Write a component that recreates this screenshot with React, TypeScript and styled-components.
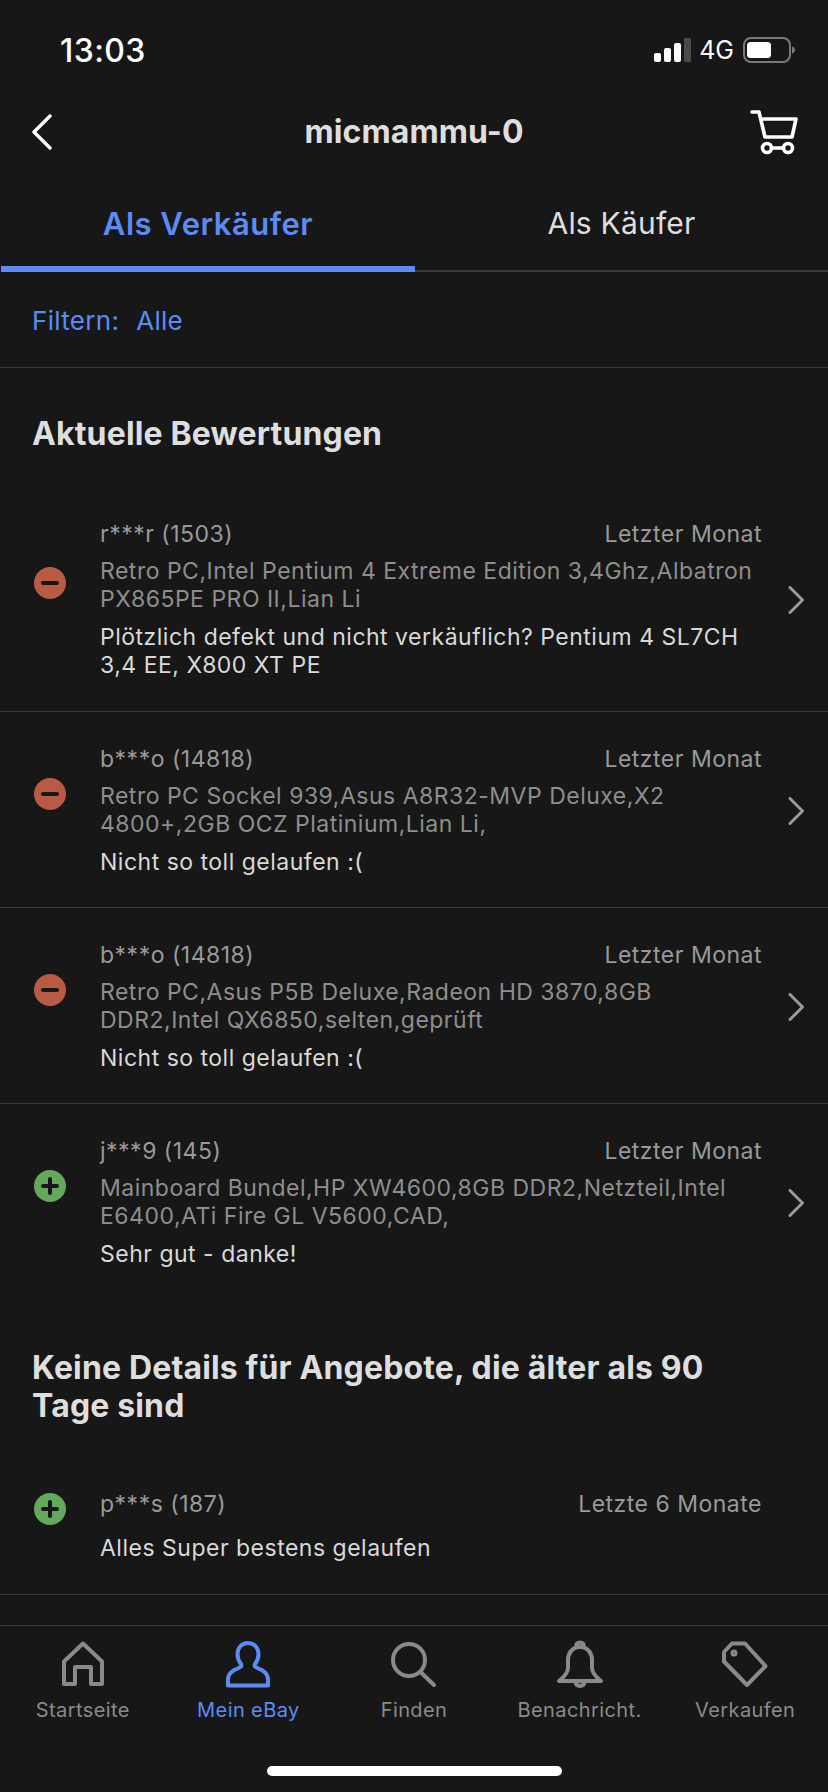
import React from 'react';
import styled, { createGlobalStyle } from 'styled-components';

const GlobalStyle = createGlobalStyle`
	html, body {
		margin: 0;
		padding: 0;
		background: #171717;
	}
	* {
		box-sizing: border-box;
	}
`;

const Screen = styled.div`
	width: 828px;
	height: 1792px;
	display: flex;
	flex-direction: column;
	overflow: hidden;
	background: #171717;
	font-family: Inter, 'Liberation Sans', sans-serif;
`;

const StatusBar = styled.div`
	height: 100px;
	flex: none;
	display: flex;
	align-items: center;
	justify-content: space-between;
	padding: 0 33px 0 60px;
`;

const Time = styled.span`
	font-size: 32px;
	font-weight: 500;
	letter-spacing: 0.4px;
	color: #fff;
`;

const StatusIcons = styled.div`
	display: flex;
	align-items: center;
`;

const Carrier = styled.span`
	font-size: 25px;
	color: #fff;
	margin: 0 9px 0 8px;
`;

const Nav = styled.div`
	height: 64px;
	flex: none;
	display: grid;
	grid-template-columns: 48px 1fr 48px;
	align-items: center;
	justify-items: center;
	padding: 0 30px;
`;

const BackSlot = styled.div`
	justify-self: start;
	display: flex;
`;

const Title = styled.span`
	font-size: 32px;
	font-weight: 700;
	letter-spacing: 0.1px;
	line-height: 36px;
	color: #dedede;
`;

const Tabs = styled.div`
	height: 108px;
	flex: none;
	display: grid;
	grid-template-columns: 415px 1fr;
`;

const Tab = styled.div<{ $active?: boolean }>`
	display: flex;
	align-items: center;
	justify-content: center;
	padding-top: 16px;
	padding-bottom: ${(p) => (p.$active ? 0 : 4)}px;
	margin-left: ${(p) => (p.$active ? 1 : 0)}px;
	font-size: ${(p) => (p.$active ? 31 : 30)}px;
	font-weight: ${(p) => (p.$active ? 600 : 400)};
	letter-spacing: ${(p) => (p.$active ? 0.5 : 0.2)}px;
	color: ${(p) => (p.$active ? '#5b8cf5' : '#dedede')};
	border-bottom: ${(p) => (p.$active ? '6px solid #5b8cf5' : '2px solid #3a3a3a')};
`;

const FilterBar = styled.div`
	height: 96px;
	flex: none;
	display: flex;
	align-items: center;
	gap: 17px;
	padding: 2px 32px 0;
	font-size: 26px;
	letter-spacing: 0.3px;
	color: #5b8cf5;
	border-bottom: 1px solid #3a3a3a;
`;

const Content = styled.div`
	flex: 1;
	min-height: 0;
	overflow: hidden;
`;

const SectionTitle = styled.h2<{ $top: number; $bottom: number }>`
	margin: 0;
	padding: ${(p) => p.$top}px 100px ${(p) => p.$bottom}px 32px;
	font-size: 32px;
	line-height: 38px;
	font-weight: 700;
	letter-spacing: 0.15px;
	color: #dedede;
`;

const Row = styled.div<{ $divider?: boolean }>`
	display: flex;
	align-items: center;
	padding: 33px 24px 31px 34px;
	border-bottom: ${(p) => (p.$divider ? '1px solid #3a3a3a' : 'none')};

	h2 + & {
		padding-bottom: 32px;
	}
`;

const Badge = styled.svg`
	flex: none;
	width: 32px;
	height: 32px;
	margin: 0 34px 34px 0;
`;

const RowBody = styled.div`
	flex: 1;
	min-width: 0;
	font-size: 23px;
	line-height: 28px;
	letter-spacing: 0.5px;
`;

const RowHead = styled.div`
	display: flex;
	justify-content: space-between;
	color: #9a9a9a;
`;

const Product = styled.div`
	margin-top: 9px;
	color: #8e8e8e;
`;

const Comment = styled.div<{ $gap: number }>`
	margin-top: ${(p) => p.$gap}px;
	color: #d9d9d9;
`;

const Chevron = styled.svg<{ $hidden?: boolean }>`
	flex: none;
	width: 16px;
	height: 28px;
	margin-left: 26px;
	visibility: ${(p) => (p.$hidden ? 'hidden' : 'visible')};
`;

const BottomBar = styled.div`
	height: 167px;
	flex: none;
	display: flex;
	flex-direction: column;
	align-items: center;
	border-top: 1px solid #3a3a3a;
`;

const BottomTabs = styled.div`
	width: 100%;
	padding-top: 14px;
	display: grid;
	grid-template-columns: repeat(5, 1fr);
`;

const BottomTab = styled.div<{ $active?: boolean }>`
	display: flex;
	flex-direction: column;
	align-items: center;
	gap: 9px;
	color: ${(p) => (p.$active ? '#5b8cf5' : '#8a8a8a')};
	font-size: 20px;
	letter-spacing: 0.4px;
	line-height: 26px;
	white-space: nowrap;
`;

const TabIcon = styled.svg`
	width: 48px;
	height: 48px;
	fill: none;
	stroke: currentColor;
	stroke-width: 4;
	stroke-linecap: round;
	stroke-linejoin: round;
`;

const HomeIndicator = styled.div`
	width: 295px;
	height: 10px;
	margin-top: 43px;
	border-radius: 5px;
	background: #fff;
`;

const SignalBars = () => (
	<svg width="37" height="24" viewBox="0 0 37 24">
		<rect x="0" y="15" width="7" height="9" rx="2" fill="#fff" />
		<rect x="10" y="10" width="7" height="14" rx="2" fill="#fff" />
		<rect x="20" y="5" width="7" height="19" rx="2" fill="#fff" />
		<rect x="30" y="0" width="7" height="24" rx="1" fill="#4a4a4a" />
	</svg>
);

const Battery = () => (
	<svg width="52" height="26" viewBox="0 0 52 26">
		<rect x="1" y="1" width="46" height="24" rx="7" fill="none" stroke="#7a7a7a" strokeWidth="2" />
		<rect x="4" y="5" width="24" height="16" rx="3.5" fill="#fff" />
		<path d="M49 9.5c2 .6 3 2 3 3.5s-1 2.900-3 3.500Z" fill="#7a7a7a" />
	</svg>
);

const BackIcon = () => (
	<svg width="22" height="36" viewBox="0 0 22 36" fill="none">
		<path d="M20 2 4 18l16 16" stroke="#fff" strokeWidth="3.4" strokeLinecap="round" strokeLinejoin="round" />
	</svg>
);

const CartIcon = () => (
	<svg width="48" height="46" viewBox="0 0 48 46" fill="none" stroke="#fff" strokeWidth="3.6" strokeLinecap="round" strokeLinejoin="round">
		<path d="M2 3h7l6 25h27l4-18H11" />
		<circle cx="17" cy="39" r="4.500" />
		<circle cx="38" cy="39" r="4.500" />
		<path d="M21.500 39h12" />
	</svg>
);

const RowChevron = ({ hidden }: { hidden: boolean }) => (
	<Chevron viewBox="0 0 16 28" fill="none" $hidden={hidden}>
		<path d="M2 1.500 14.500 14 2 26.500" stroke="#9a9a9a" strokeWidth="3" strokeLinecap="round" strokeLinejoin="round" />
	</Chevron>
);

const RatingBadge = ({ positive }: { positive: boolean }) => (
	<Badge viewBox="0 0 32 32">
		<circle cx="16" cy="16" r="16" fill={positive ? '#64a85c' : '#b85b45'} />
		<path d="M9 16h14" stroke="#171717" strokeWidth="4" strokeLinecap="round" />
		{positive && <path d="M16 9v14" stroke="#171717" strokeWidth="4" strokeLinecap="round" />}
	</Badge>
);

const HomeGlyph = () => (
	<TabIcon viewBox="0 0 48 48">
		<path d="M5 44V21.500L24 3.500l19 18V44H32V27H16v17Z" />
	</TabIcon>
);

const PersonGlyph = () => (
	<TabIcon viewBox="0 0 48 48">
		<path d="M24 3C17.500 3 13.500 8 13.500 14c0 4 1.500 7.500 3.500 10 .8 1.200.2 2.500-1 3.200l-6 3C6 32.500 4 35.500 4 39.500v6h40v-6C44 35.500 42 32.500 38 30.200l-6-3c-1.200-.7-1.800-2-1-3.200 2-2.500 3.500-6 3.500-10C34.500 8 30.500 3 24 3Z" />
	</TabIcon>
);

const SearchGlyph = () => (
	<TabIcon viewBox="0 0 48 48">
		<circle cx="19" cy="20" r="16" />
		<path d="M30.500 32 44 45" />
	</TabIcon>
);

const BellGlyph = () => (
	<TabIcon viewBox="0 0 48 48">
		<path d="M24 7C16.500 7 12 13 12 20v8c0 4-4 9-9 13h42c-5-4-9-9-9-13v-8C36 13 31.500 7 24 7Z" />
		<path d="M20 7c0-3 1.500-4.500 4-4.500S28 4 28 7" />
		<path d="M19.500 41c0 3.500 2 5 4.500 5s4.500-1.500 4.500-5" />
	</TabIcon>
);

const TagGlyph = () => (
	<TabIcon viewBox="0 0 48 48">
		<path d="M11 3.500h13L44.500 26 26 45 3 21.500V12Z" />
		<circle cx="13" cy="13" r="1.500" />
	</TabIcon>
);

interface Rating {
	id: string;
	positive: boolean;
	user: string;
	when: string;
	product?: string;
	comment: string;
	divider: boolean;
}

const recent: Rating[] = [
	{
		id: 'a',
		positive: false,
		user: 'r***r (1503)',
		when: 'Letzter Monat',
		product: 'Retro PC,Intel Pentium 4 Extreme Edition 3,4Ghz,Albatron PX865PE PRO II,Lian Li',
		comment: 'Plötzlich defekt und nicht verkäuflich? Pentium 4 SL7CH 3,4 EE, X800 XT PE',
		divider: true,
	},
	{
		id: 'b',
		positive: false,
		user: 'b***o (14818)',
		when: 'Letzter Monat',
		product: 'Retro PC Sockel 939,Asus A8R32-MVP Deluxe,X2 4800+,2GB OCZ Platinium,Lian Li,',
		comment: 'Nicht so toll gelaufen :(',
		divider: true,
	},
	{
		id: 'c',
		positive: false,
		user: 'b***o (14818)',
		when: 'Letzter Monat',
		product: 'Retro PC,Asus P5B Deluxe,Radeon HD 3870,8GB DDR2,Intel QX6850,selten,geprüft',
		comment: 'Nicht so toll gelaufen :(',
		divider: true,
	},
	{
		id: 'd',
		positive: true,
		user: 'j***9 (145)',
		when: 'Letzter Monat',
		product: 'Mainboard Bundel,HP XW4600,8GB DDR2,Netzteil,Intel E6400,ATi Fire GL V5600,CAD,',
		comment: 'Sehr gut - danke!',
		divider: false,
	},
];

const older: Rating[] = [
	{
		id: 'e',
		positive: true,
		user: 'p***s (187)',
		when: 'Letzte 6 Monate',
		comment: 'Alles Super bestens gelaufen',
		divider: true,
	},
];

const RatingRow = ({ rating }: { rating: Rating }) => (
	<Row $divider={rating.divider}>
		<RatingBadge positive={rating.positive} />
		<RowBody>
			<RowHead>
				<span>{rating.user}</span>
				<span>{rating.when}</span>
			</RowHead>
			{rating.product && <Product>{rating.product}</Product>}
			<Comment $gap={rating.product ? 10 : 16}>{rating.comment}</Comment>
		</RowBody>
		<RowChevron hidden={!rating.product} />
	</Row>
);

export default function App() {
	return (
		<Screen>
			<GlobalStyle />
			<StatusBar>
				<Time>13:03</Time>
				<StatusIcons>
					<SignalBars />
					<Carrier>4G</Carrier>
					<Battery />
				</StatusIcons>
			</StatusBar>
			<Nav>
				<BackSlot>
					<BackIcon />
				</BackSlot>
				<Title>micmammu-0</Title>
				<CartIcon />
			</Nav>
			<Tabs>
				<Tab $active>Als Verkäufer</Tab>
				<Tab>Als Käufer</Tab>
			</Tabs>
			<FilterBar>
				<span>Filtern:</span>
				<span>Alle</span>
			</FilterBar>
			<Content>
				<SectionTitle $top={47} $bottom={34}>
					Aktuelle Bewertungen
				</SectionTitle>
				{recent.map((rating) => (
					<RatingRow key={rating.id} rating={rating} />
				))}
				<SectionTitle $top={50} $bottom={32}>
					Keine Details für Angebote, die älter als 90 Tage sind
				</SectionTitle>
				{older.map((rating) => (
					<RatingRow key={rating.id} rating={rating} />
				))}
			</Content>
			<BottomBar>
				<BottomTabs>
					<BottomTab>
						<HomeGlyph />
						Startseite
					</BottomTab>
					<BottomTab $active>
						<PersonGlyph />
						Mein eBay
					</BottomTab>
					<BottomTab>
						<SearchGlyph />
						Finden
					</BottomTab>
					<BottomTab>
						<BellGlyph />
						Benachricht.
					</BottomTab>
					<BottomTab>
						<TagGlyph />
						Verkaufen
					</BottomTab>
				</BottomTabs>
				<HomeIndicator />
			</BottomBar>
		</Screen>
	);
}
